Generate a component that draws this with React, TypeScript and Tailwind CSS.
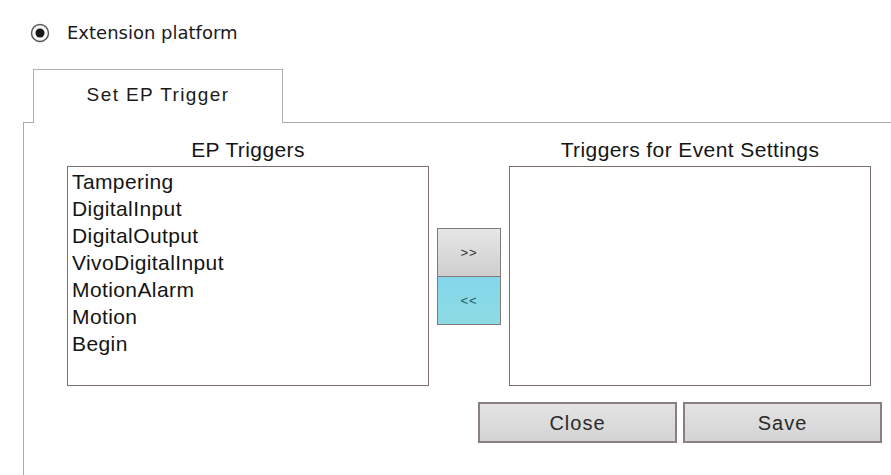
const epTriggers = [
  "Tampering",
  "DigitalInput",
  "DigitalOutput",
  "VivoDigitalInput",
  "MotionAlarm",
  "Motion",
  "Begin",
];

const eventTriggers: string[] = [];

function ListBox({ title, items }: { title: string; items: string[] }) {
  return (
    <div className="flex flex-col">
      <div className="h-[24px] text-center text-[21px] leading-[24px] tracking-[0.4px] text-[#151515]">
        {title}
      </div>
      <ul className="mt-[4px] h-[220px] w-[362px] border border-[#7a6e6e] bg-white pl-[4px] pt-px">
        {items.map((item) => (
          <li
            key={item}
            className="h-[27px] text-[21px] leading-[27px] tracking-[0.4px] text-[#141414]"
          >
            {item}
          </li>
        ))}
      </ul>
    </div>
  );
}

export default function App() {
  return (
    <div className="flex h-[475px] w-[891px] flex-col overflow-hidden bg-white font-['Liberation_Sans',Arial,sans-serif]">
      {/* radio */}
      <div className="mt-[23px] flex h-[20px] items-center pl-[30px]">
        <svg width="20" height="20" viewBox="0 0 20 20">
          <circle cx="10" cy="10" r="8.5" fill="#f7f7f7" stroke="#5a5a5a" strokeWidth="1.5" />
          <circle cx="10" cy="10" r="4.5" fill="#151515" />
        </svg>
        <span className="ml-[17px] font-['DejaVu_Sans',sans-serif] text-[18px] leading-[18px] text-[#1a1a1a]">
          Extension platform
        </span>
      </div>

      {/* tab */}
      <div className="relative z-10 -mb-px ml-[33px] mt-[26px] flex h-[54px] w-[250px] items-center justify-center border border-b-0 border-[#b5aeae] bg-white pb-[2px]">
        <span className="text-[19px] tracking-[1.4px] text-[#1a1a1a]">Set EP Trigger</span>
      </div>

      {/* panel */}
      <div className="ml-[23px] flex flex-1 flex-col border-l border-t border-[#b0a8a8] pl-[43px] pt-[15px]">
        <div className="flex items-start">
          <ListBox title="EP Triggers" items={epTriggers} />

          <div className="mx-[8px] flex w-[64px] flex-col pt-[90px]">
            <button className="h-[49px] w-[64px] border border-[#857a7a] bg-gradient-to-b from-[#e6e6e6] to-[#cfcfcf] text-[13px] tracking-[1px] text-[#333]">
              &gt;&gt;
            </button>
            <button className="-mt-px h-[49px] w-[64px] border border-[#857a7a] bg-gradient-to-b from-[#84d6ea] to-[#8cdbe4] text-[13px] tracking-[1px] text-[#2a5a62]">
              &lt;&lt;
            </button>
          </div>

          <ListBox title="Triggers for Event Settings" items={eventTriggers} />
        </div>

        <div className="mt-[16px] flex justify-end gap-[6px] pr-[9px]">
          <button className="h-[41px] w-[199px] border-2 border-[#8a7e7e] bg-gradient-to-b from-[#e4e4e4] to-[#d4d4d4] text-[20px] tracking-[1px] text-[#2a2a2a]">
            Close
          </button>
          <button className="h-[41px] w-[199px] border-2 border-[#8a7e7e] bg-gradient-to-b from-[#e4e4e4] to-[#d4d4d4] text-[20px] tracking-[1px] text-[#2a2a2a]">
            Save
          </button>
        </div>
      </div>
    </div>
  );
}
